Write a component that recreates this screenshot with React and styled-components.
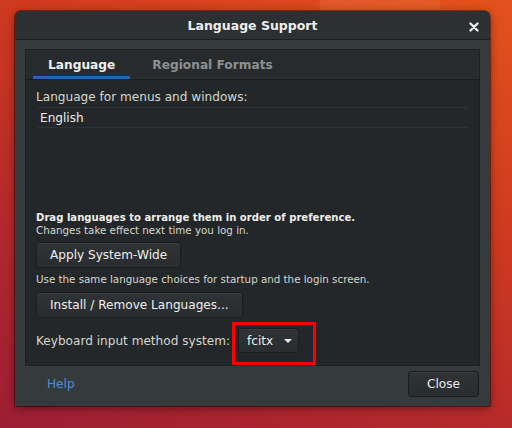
import React from 'react';
import styled, { createGlobalStyle } from 'styled-components';

const Global = createGlobalStyle`
    html, body {
        margin: 0;
        padding: 0;
        width: 512px;
        height: 428px;
        overflow: hidden;
    }
    body {
        font-family: "DejaVu Sans", "Noto Sans", sans-serif;
        font-size: 12px;
        color: #eeeeec;
    }
`;

const Desktop = styled.div`
    width: 512px;
    height: 428px;
    box-sizing: border-box;
    padding: 11px 22px 0 15px;
    background:
        radial-gradient(circle at 380px 10px, rgba(235, 120, 70, 0.3) 0 60px, transparent 61px),
        linear-gradient(205deg, #e4521c 0%, #cf3a1f 35%, #b62a2a 65%, #9c1d34 100%);
`;

const Window = styled.div`
    width: 475px;
    height: 395px;
    display: flex;
    flex-direction: column;
    background: #353a3c;
    border-radius: 6px 6px 0 0;
    box-shadow: 0 2px 8px rgba(0, 0, 0, 0.45), 0 0 0 1px rgba(0, 0, 0, 0.35);
    overflow: hidden;
`;

const TitleBar = styled.div`
    height: 28px;
    flex: none;
    display: flex;
    align-items: center;
    justify-content: center;
    position: relative;
    background: #2c3032;
    border-bottom: 1px solid #1c1f20;
    font-weight: bold;
    font-size: 12.5px;
    color: #eeeeec;
`;

const CloseX = styled.span`
    position: absolute;
    right: 11px;
    top: 9px;
    width: 10px;
    height: 10px;
`;

const Body = styled.div`
    flex: 1;
    display: flex;
    flex-direction: column;
    padding: 9px 10px 0 10px;
`;

const Notebook = styled.div`
    height: 317px;
    display: flex;
    flex-direction: column;
    background: #232729;
    border: 1px solid #1d2022;
    box-sizing: border-box;
`;

const TabBar = styled.div`
    height: 29px;
    display: flex;
    gap: 7px;
    padding-left: 7px;
    border-bottom: 1px solid #1a1d1e;
    background: #272b2d;
`;

const Tab = styled.div`
    padding: 0 15px;
    display: flex;
    align-items: center;
    font-weight: bold;
    font-size: 12.2px;
    color: ${p => (p.$active ? '#eeeeec' : '#8d9091')};
    box-shadow: ${p => (p.$active ? 'inset 0 -3px 0 #2266ad' : 'none')};
`;

const Page = styled.div`
    flex: 1;
    display: flex;
    flex-direction: column;
    padding: 9px 10px 0 10px;
`;

const Label = styled.div`
    color: ${p => (p.$bold ? '#eeeeec' : '#d3d7cf')};
    font-weight: ${p => (p.$bold ? 'bold' : 'normal')};
    font-size: ${p => (p.$small ? (p.$bold ? '10.1px' : '10.3px') : '12.1px')};
    line-height: ${p => (p.$small ? '13px' : '16px')};
`;

const LangList = styled.div`
    margin-top: 2px;
    height: 84px;
    display: flex;
    flex-direction: column;
`;

const LangRow = styled.div`
    height: 19px;
    display: flex;
    align-items: center;
    padding-left: 3px;
    margin-left: 1px;
    width: 428px;
    border-top: 1px solid #2d3234;
    border-bottom: 1px solid #2d3234;
    font-size: 12.1px;
    color: #eeeeec;
`;

const Section = styled.div`
    display: flex;
    flex-direction: column;
    margin-top: ${p => p.$top || 0}px;
`;

const Button = styled.button`
    align-self: flex-start;
    height: 26px;
    padding: 0 13px;
    font-family: inherit;
    font-size: 12.1px;
    color: #eeeeec;
    background: linear-gradient(#2f3335, #2a2d2f);
    border: 1px solid #1b1e1f;
    border-radius: 3px;
    box-shadow: inset 0 1px rgba(255, 255, 255, 0.04);
`;

const InputRow = styled.div`
    display: flex;
    align-items: center;
    gap: 8px;
    margin-top: 10px;
`;

const Highlight = styled.div`
    position: relative;
    display: flex;
`;

const RedBox = styled.div`
    position: absolute;
    left: -6px;
    top: -6px;
    width: 84px;
    height: 43px;
    border: 3px solid #ff0000;
    box-sizing: border-box;
    pointer-events: none;
`;

const Combo = styled(Button)`
    height: 25px;
    width: 61px;
    padding: 0 0 0 8px;
    display: flex;
    align-items: center;
    gap: 11px;
`;

const Arrow = styled.span`
    width: 0;
    height: 0;
    border-left: 4px solid transparent;
    border-right: 4px solid transparent;
    border-top: 4px solid #eeeeec;
`;

const Footer = styled.div`
    flex: 1;
    display: flex;
    align-items: center;
    justify-content: space-between;
    padding: 0 1px 4px 22px;
`;

const HelpLink = styled.a`
    color: #4b8fd6;
    font-size: 12.1px;
    text-decoration: none;
`;

const CloseButton = styled(Button)`
    width: 71px;
    padding: 0;
    text-align: center;
    align-self: center;
`;

export default function App() {
    return (
        <>
            <Global />
            <Desktop>
                <Window>
                    <TitleBar>
                        Language Support
                        <CloseX>
                            <svg width="10" height="10" viewBox="0 0 10 10">
                                <path d="M1.5 1.5 L8.5 8.5 M8.5 1.5 L1.5 8.5" stroke="#eeeeec" strokeWidth="2.4" strokeLinecap="round" />
                            </svg>
                        </CloseX>
                    </TitleBar>
                    <Body>
                        <Notebook>
                            <TabBar>
                                <Tab $active>Language</Tab>
                                <Tab>Regional Formats</Tab>
                            </TabBar>
                            <Page>
                                <Label>Language for menus and windows:</Label>
                                <LangList>
                                    <LangRow>English</LangRow>
                                </LangList>
                                <Section $top={20}>
                                    <Label $bold $small>Drag languages to arrange them in order of preference.</Label>
                                    <Label $small>Changes take effect next time you log in.</Label>
                                </Section>
                                <Section $top={5}>
                                    <Button>Apply System-Wide</Button>
                                </Section>
                                <Section $top={5}>
                                    <Label $small>Use the same language choices for startup and the login screen.</Label>
                                </Section>
                                <Section $top={6}>
                                    <Button>Install / Remove Languages...</Button>
                                </Section>
                                <InputRow>
                                    <Label>Keyboard input method system:</Label>
                                    <Highlight>
                                        <Combo>
                                            fcitx <Arrow />
                                        </Combo>
                                        <RedBox />
                                    </Highlight>
                                </InputRow>
                            </Page>
                        </Notebook>
                        <Footer>
                            <HelpLink href="#">Help</HelpLink>
                            <CloseButton>Close</CloseButton>
                        </Footer>
                    </Body>
                </Window>
            </Desktop>
        </>
    );
}
